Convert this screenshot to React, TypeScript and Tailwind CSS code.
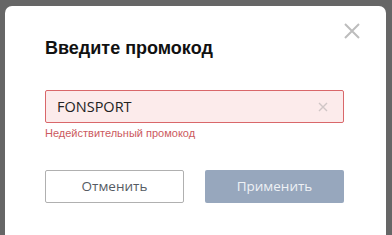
export default function App() {
  return (
    <div className="h-[235px] w-[392px] overflow-hidden bg-[#666666] pl-[5px] pr-[6px] pt-[6px]">
      <div className="relative h-[240px] rounded-t-[7px] bg-white pl-[40px] pr-[41px] pt-[32px]">
        <button className="absolute right-[26px] top-[17px] h-[16px] w-[16px] text-[#bdbdbd]">
          <svg viewBox="0 0 16 16" className="h-[16px] w-[16px]" stroke="currentColor" strokeWidth="2">
            <path d="M1 1L15 15M15 1L1 15" />
          </svg>
        </button>
        <h2 className="font-['Liberation_Sans',Arial,sans-serif] text-[18px] leading-[21px] font-bold text-[#111]">
          Введите промокод
        </h2>
        <div className="mt-[31px] flex h-[33px] w-[299px] items-center justify-between rounded-[2px] border border-[#d9676a] bg-[#fcebeb] pl-[11px] pr-[15px]">
          <span className="font-['Open_Sans',sans-serif] text-[14.5px] text-[#222]">FONSPORT</span>
          <svg viewBox="0 0 10 10" className="h-[10px] w-[10px]" stroke="#d0c6c6" strokeWidth="1.4">
            <path d="M1 1L9 9M9 1L1 9" />
          </svg>
        </div>
        <p className="mt-[3px] font-['Liberation_Sans',Arial,sans-serif] text-[11px] leading-[15px] text-[#cc5a5e]">
          Недействительный промокод
        </p>
        <div className="mt-[29px] flex gap-[21px]">
          <button className="h-[33px] w-[139px] rounded-[2px] border border-[#b0b0b0] bg-white font-['Open_Sans',sans-serif] text-[13.5px] text-[#555b63]">
            Отменить
          </button>
          <button className="h-[33px] w-[139px] rounded-[2px] bg-[#97a7bd] font-['Open_Sans',sans-serif] text-[13.5px] text-[#eef1f5]">
            Применить
          </button>
        </div>
      </div>
    </div>
  );
}
